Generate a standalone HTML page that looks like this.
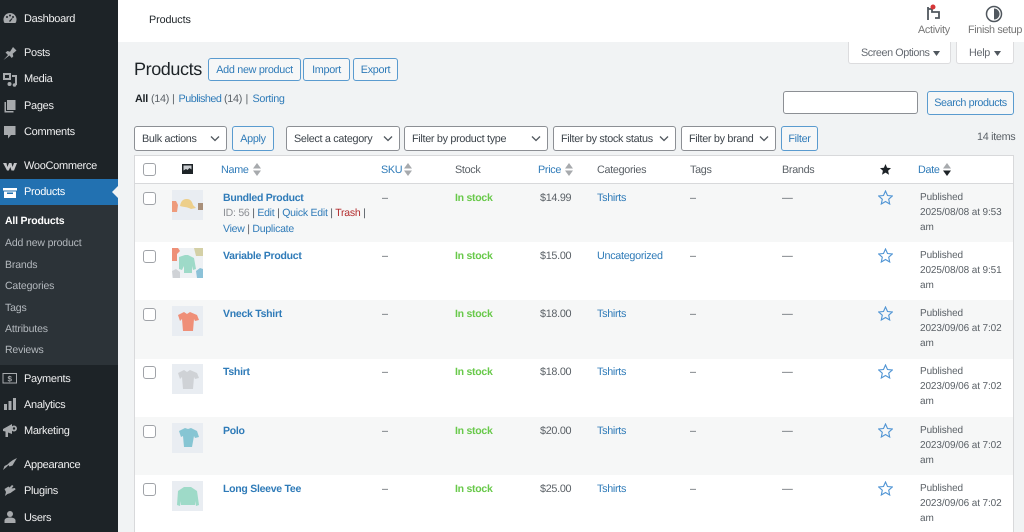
<!DOCTYPE html>
<html><head><meta charset="utf-8"><style>
html,body{margin:0;padding:0;width:1024px;height:532px;overflow:hidden;background:#f1f3f4;font-family:"Liberation Sans",sans-serif;font-size:10.8px;color:#5a6066;letter-spacing:-.3px;text-rendering:geometricPrecision}
#w{position:absolute;left:0;top:0;width:1024px;height:532px;overflow:hidden;filter:blur(.3px)}
.t{position:absolute;white-space:nowrap;line-height:14px}
.b{position:absolute;box-sizing:border-box;border-radius:3px}
.abs{position:absolute}
.m{color:#f0f0f1;font-size:11px}
.s{color:#b4b9be;font-size:10.5px;letter-spacing:-.15px}
.l{color:#2f7bb8}
.btn{border:1px solid #5a9bcf;background:#f6f7f7;color:#2f7bb8;text-align:center;line-height:22px}
.sel{border:1px solid #8c8f94;background:#fff;color:#3c434a;line-height:25px;padding-left:7px}
.sel svg{position:absolute;right:6px;top:8px}
.cb{position:absolute;left:143px;width:11px;height:11px;border:1px solid #a0a3a8;border-radius:3px;background:#fff;box-sizing:content-box}
.n{color:#2f7bb8;font-weight:bold;font-size:10.5px;letter-spacing:-.27px}
.g{color:#68c94a;font-weight:bold;font-size:10.5px;letter-spacing:-.27px}
.row{position:absolute;left:135px;width:878px}
.d{line-height:14.800px;font-size:10px;letter-spacing:-.1px}
</style></head><body><div id="w">
<div class="abs" style="left:0;top:0;width:118px;height:532px;background:#1d2327"></div>
<div class="abs" style="left:0;top:205px;width:118px;height:160px;background:#2c3338"></div>
<div class="abs" style="left:0;top:179px;width:118px;height:26px;background:#2271b1"></div>
<svg class="abs" style="left:112px;top:186px" width="6" height="12"><path d="M6 0L0 6L6 12Z" fill="#f1f3f4"/></svg>
<div class="abs" style="left:118px;top:0;width:906px;height:42px;background:#fff"></div>

<svg class="abs" style="left:0;top:0" width="22" height="532" fill="#a7aaad">
<path d="M10 13a6.500 6.500 0 0 1 5.500 10H4.500A6.500 6.500 0 0 1 10 13z"/><circle cx="7" cy="17" r="1" fill="#1d2327"/><circle cx="13" cy="17" r="1" fill="#1d2327"/><circle cx="10" cy="15.500" r="1" fill="#1d2327"/><path d="M9 21l3-3 .6.6-2.600 3.400z" fill="#1d2327"/>
<path d="M3.500 60l4.500-5-2.500-2.500 2-1.500 2.500.8L13 47l3.500 3.500-3.800 3.200.6 2.600-1.500 1.700L9.500 55.500z"/>
<path d="M3 73h8v7H3z M5 75v3h4v-3z" fill-rule="evenodd"/><path d="M12 75h5v10h-2v-8h-3z"/><circle cx="9.500" cy="84" r="2"/><circle cx="14.500" cy="85" r="1.800"/>
<path d="M7 100h8.500v10H7z"/><path d="M4.500 102H6v9h7.500v1.500h-9z"/>
<path d="M4 126h11.500v9h-4.500l-3 3.500v-3.500H4z"/>
<path d="M3 163h3.500l.8 4 1.700-4h2.500l1 4 1.500-4H17l-3 7.500h-2.500l-1.200-3.500-1.500 3.500H7z" fill="#c3c4c7"/>
<path d="M3 188h14v2.500H3zM4 191.500h12v6.500H4z" fill="#fff"/><path d="M7 192.500h6v1.500H7z" fill="#2271b1"/>
<path d="M2.500 373h14.500v10.500H2.500z M3.500 374v8.500h12.500v-8.500z" fill-rule="evenodd"/><text x="7.500" y="381.500" font-size="8" fill="#a7aaad" font-family="Liberation Sans" font-weight="bold">$</text>
<path d="M4 404h3v6H4zM8.500 401h3v9h-3zM13 398h3v12h-3z"/>
<path d="M3 429l9-5v10l-4-1.500v4.500H5.500v-5.500L3 431z"/><circle cx="14" cy="428.500" r="3"/><circle cx="14" cy="428.500" r="1.200" fill="#1d2327"/>
<path d="M3 470l1.500-4 3-1.500 2-2L13 460l4-2-2.500 4-2 3.500-3 1-1-1.500-2.500 2.500z"/>
<path d="M5 496l1-4-1.500-3 4-2.500 1 1L12 485l1.500 1-2 2.500L15 488l.5 1.500-3 2-2 1.500-3 1z"/>
<circle cx="10" cy="514" r="3"/><path d="M4.500 523v-2.500c0-2 2.500-3 5.500-3s5.500 1 5.500 3V523z"/>
</svg>

<span class="t m" style="left:24px;top:12px">Dashboard</span>
<span class="t m" style="left:24px;top:46px">Posts</span>
<span class="t m" style="left:24px;top:72px">Media</span>
<span class="t m" style="left:24px;top:99px">Pages</span>
<span class="t m" style="left:24px;top:125px">Comments</span>
<span class="t m" style="left:24px;top:159px">WooCommerce</span>
<span class="t m" style="left:24px;top:185px;color:#fff">Products</span>
<span class="t" style="left:5px;top:214px;color:#fff;font-weight:bold;font-size:10.5px;letter-spacing:-.2px">All Products</span>
<span class="t s" style="left:5px;top:236px">Add new product</span>
<span class="t s" style="left:5px;top:258px">Brands</span>
<span class="t s" style="left:5px;top:279px">Categories</span>
<span class="t s" style="left:5px;top:301px">Tags</span>
<span class="t s" style="left:5px;top:322px">Attributes</span>
<span class="t s" style="left:5px;top:343px">Reviews</span>
<span class="t m" style="left:24px;top:372px">Payments</span>
<span class="t m" style="left:24px;top:398px">Analytics</span>
<span class="t m" style="left:24px;top:424px">Marketing</span>
<span class="t m" style="left:24px;top:458px">Appearance</span>
<span class="t m" style="left:24px;top:484px">Plugins</span>
<span class="t m" style="left:24px;top:511px">Users</span>

<span class="t" style="left:149px;top:13px;color:#1d2327;font-size:10.8px;letter-spacing:-.1px">Products</span>
<svg class="abs" style="left:925px;top:3px" width="18" height="18"><path d="M3 4v13M3 6h4v3h7V15h-4" fill="none" stroke="#50575e" stroke-width="1.800"/><circle cx="8" cy="4" r="2.500" fill="#d63638"/></svg>
<span class="t" style="left:918px;top:23px;color:#757575">Activity</span>
<svg class="abs" style="left:985px;top:5px" width="18" height="18"><circle cx="9" cy="9" r="7.500" fill="#fff" stroke="#50575e" stroke-width="1.500"/><path d="M9 3.500a5.500 5.500 0 0 1 0 11z" fill="#50575e"/></svg>
<span class="t" style="left:968px;top:23px;color:#757575;letter-spacing:-.35px">Finish setup</span>

<div class="b" style="left:848px;top:42px;width:103px;height:22px;background:#fff;border:1px solid #dcdcde;border-top:0;border-radius:0 0 3px 3px"></div>
<span class="t" style="left:861px;top:46px;color:#646970;letter-spacing:-.42px">Screen Options</span>
<svg class="abs" style="left:933px;top:51px" width="8" height="6"><path d="M0 0h7L3.500 5z" fill="#50575e"/></svg>
<div class="b" style="left:956px;top:42px;width:58px;height:22px;background:#fff;border:1px solid #dcdcde;border-top:0;border-radius:0 0 3px 3px"></div>
<span class="t" style="left:969px;top:46px;color:#646970">Help</span>
<svg class="abs" style="left:994px;top:51px" width="8" height="6"><path d="M0 0h7L3.500 5z" fill="#50575e"/></svg>

<span class="t" style="left:134px;top:59px;font-size:18px;line-height:20px;color:#1d2327;letter-spacing:-.4px">Products</span>
<div class="b btn" style="left:208px;top:58px;width:93px;height:23px">Add new product</div>
<div class="b btn" style="left:303px;top:58px;width:47px;height:23px">Import</div>
<div class="b btn" style="left:353px;top:58px;width:45px;height:23px">Export</div>

<b class="t" style="left:135px;top:92px;color:#1d2327">All</b>
<span class="t" style="left:151px;top:92px">(14)</span>
<span class="t" style="left:172px;top:92px">|</span>
<span class="t l" style="left:178.500px;top:92px;letter-spacing:-.5px">Published</span>
<span class="t" style="left:224px;top:92px">(14)</span>
<span class="t" style="left:245.500px;top:92px">|</span>
<span class="t l" style="left:252.500px;top:92px">Sorting</span>

<div class="b" style="left:783px;top:91px;width:135px;height:23px;background:#fff;border:1px solid #8c8f94"></div>
<div class="b btn" style="left:927px;top:91px;width:87px;height:24px;line-height:23px;letter-spacing:-.4px">Search products</div>

<div class="b sel" style="left:134px;top:126px;width:93px;height:25px">Bulk actions<svg width="10" height="8"><path d="M1 1.500l4 4 4-4" fill="none" stroke="#50575e" stroke-width="1.300"/></svg></div>
<div class="b btn" style="left:232px;top:126px;width:42px;height:25px;line-height:25px">Apply</div>
<div class="b sel" style="left:286px;top:126px;width:114px;height:25px">Select a category<svg width="10" height="8"><path d="M1 1.500l4 4 4-4" fill="none" stroke="#50575e" stroke-width="1.300"/></svg></div>
<div class="b sel" style="left:404px;top:126px;width:144px;height:25px">Filter by product type<svg width="10" height="8"><path d="M1 1.500l4 4 4-4" fill="none" stroke="#50575e" stroke-width="1.300"/></svg></div>
<div class="b sel" style="left:553px;top:126px;width:123px;height:25px">Filter by stock status<svg width="10" height="8"><path d="M1 1.500l4 4 4-4" fill="none" stroke="#50575e" stroke-width="1.300"/></svg></div>
<div class="b sel" style="left:681px;top:126px;width:95px;height:25px">Filter by brand<svg width="10" height="8"><path d="M1 1.500l4 4 4-4" fill="none" stroke="#50575e" stroke-width="1.300"/></svg></div>
<div class="b btn" style="left:781px;top:126px;width:37px;height:25px;line-height:25px">Filter</div>
<span class="t" style="left:977px;top:130px">14 items</span>

<div class="abs" style="left:134px;top:155px;width:880px;height:377px;background:#fff;box-sizing:border-box;border:1px solid #d8d9db;border-bottom:0"></div>
<div class="abs" style="left:135px;top:183px;width:878px;height:1px;background:#d8d9db"></div>
<div class="row" style="top:184px;height:58px;background:#f6f7f7"></div>
<div class="row" style="top:300px;height:59px;background:#f6f7f7"></div>
<div class="row" style="top:417px;height:58px;background:#f6f7f7"></div>

<div class="cb" style="top:163px"></div>
<svg class="abs" style="left:182px;top:164px" width="11" height="10"><path d="M0 0h11v10H0z" fill="#1d2327"/><path d="M1.500 1.500h8v4l-2-1.500-2 2-1.500-1-2.500 1.500z" fill="#c9ccd0"/></svg>
<span class="t l" style="left:221px;top:163px">Name</span>
<svg class="abs" style="left:253px;top:163px" width="8" height="13"><path d="M0 5.500L4 0l4 5.500zM0 7.500L4 13l4-5.500z" fill="#a7aaad"/></svg>
<span class="t l" style="left:381px;top:163px">SKU</span>
<svg class="abs" style="left:404px;top:163px" width="8" height="13"><path d="M0 5.500L4 0l4 5.500zM0 7.500L4 13l4-5.500z" fill="#a7aaad"/></svg>
<span class="t" style="left:455px;top:163px">Stock</span>
<span class="t l" style="left:538px;top:163px">Price</span>
<svg class="abs" style="left:565px;top:163px" width="8" height="13"><path d="M0 5.500L4 0l4 5.500zM0 7.500L4 13l4-5.500z" fill="#a7aaad"/></svg>
<span class="t" style="left:597px;top:163px">Categories</span>
<span class="t" style="left:690px;top:163px">Tags</span>
<span class="t" style="left:782px;top:163px">Brands</span>
<svg class="abs" style="left:880px;top:164px" width="11" height="11"><path d="M5.500 0l1.600 3.700 4 .4-3 2.600.9 4L5.500 8.600 2 10.700l.9-4-3-2.600 4-.4z" fill="#1d2327"/></svg>
<span class="t l" style="left:918px;top:163px">Date</span>
<svg class="abs" style="left:943px;top:163px" width="8" height="13"><path d="M0 5.500L4 0l4 5.500z" fill="#a7aaad"/><path d="M0 7.500L4 13l4-5.500z" fill="#1d2327"/></svg>

<!-- rows -->
<div class="cb" style="top:192px"></div>
<div class="abs" style="left:172px;top:190px;width:31px;height:30px;background:#e9edf2"></div>
<svg class="abs" style="left:172px;top:190px" width="31" height="30"><path d="M0 11h4l2 4-1 7H0z" fill="#ee9b7c"/><path d="M8 16c1-6 4-7 7-7s5 2 6 6l3 3-5 1c-3-2-8-2-11-3z" fill="#edcf8b"/><path d="M26 13h5v7h-5z" fill="#a9907a"/></svg>
<span class="t n" style="left:223px;top:191px">Bundled Product</span>
<span class="t" style="left:223px;top:206px;color:#8c8f94;font-size:10.5px;letter-spacing:-.25px">ID: 56 <span style="color:#50575e">|</span> <span class="l">Edit</span> <span style="color:#50575e">|</span> <span class="l">Quick Edit</span> <span style="color:#50575e">|</span> <span style="color:#b32d2e">Trash</span> <span style="color:#50575e">|</span></span>
<span class="t" style="left:223px;top:222px;font-size:10.5px;letter-spacing:-.25px"><span class="l">View</span> | <span class="l">Duplicate</span></span>

<div class="cb" style="top:250px"></div>
<div class="abs" style="left:172px;top:248px;width:31px;height:30px;background:#eef1f4"></div>
<svg class="abs" style="left:172px;top:248px" width="31" height="30"><path d="M0 0h6l2 3-3 3v7H0z" fill="#ee9078"/><path d="M22 0h9v8h-7z" fill="#d4d0a6"/><path d="M7 9l6-2h3l6 3 2 11-3 1-1-4v7H12v-7l-2 4-3-1z" fill="#9edac8"/><path d="M0 23l4-2 4 3v6H1z" fill="#cfd2d6"/><path d="M24 23l4-3 3 1v9h-6z" fill="#8cc2d8"/></svg>
<span class="t n" style="left:223px;top:249px">Variable Product</span>

<div class="cb" style="top:308px"></div>
<div class="abs" style="left:172px;top:306px;width:31px;height:30px;background:#e9edf2"></div>
<svg class="abs" style="left:172px;top:306px" width="31" height="30"><path d="M6 9l6-3 3 2 3-2 7 3 2 5-4 1-1-2-1 12H11l-1-12-2 2z" fill="#ef8f78"/></svg>
<span class="t n" style="left:223px;top:307px">Vneck Tshirt</span>

<div class="cb" style="top:366px"></div>
<div class="abs" style="left:172px;top:364px;width:31px;height:30px;background:#e9edf2"></div>
<svg class="abs" style="left:172px;top:364px" width="31" height="30"><path d="M6 9l6-3 3 2 3-2 7 3 2 5-4 1-1-2-1 12H11l-1-12-2 2z" fill="#cfd2d6"/></svg>
<span class="t n" style="left:223px;top:365px">Tshirt</span>

<div class="cb" style="top:425px"></div>
<div class="abs" style="left:172px;top:423px;width:31px;height:30px;background:#e9edf2"></div>
<svg class="abs" style="left:172px;top:423px" width="31" height="30"><path d="M7 8l6-3 3 1 3-1 6 3 2 6-4 1-1-2-2 11H12l-1-11-2 1z" fill="#86c5d3"/></svg>
<span class="t n" style="left:223px;top:424px">Polo</span>

<div class="cb" style="top:483px"></div>
<div class="abs" style="left:172px;top:481px;width:31px;height:30px;background:#e9edf2"></div>
<svg class="abs" style="left:172px;top:481px" width="31" height="30"><path d="M6 10l6-4h7l6 4 2 14-3 1-1-5v4H9v-4l-1 5-3-1z" fill="#9edac8"/></svg>
<span class="t n" style="left:223px;top:482px">Long Sleeve Tee</span>

<span class="t" style="left:382px;top:191px">–</span><span class="t" style="left:382px;top:249px">–</span><span class="t" style="left:382px;top:307px">–</span><span class="t" style="left:382px;top:365px">–</span><span class="t" style="left:382px;top:424px">–</span><span class="t" style="left:382px;top:482px">–</span>
<span class="t g" style="left:455px;top:191px">In stock</span><span class="t g" style="left:455px;top:249px">In stock</span><span class="t g" style="left:455px;top:307px">In stock</span><span class="t g" style="left:455px;top:365px">In stock</span><span class="t g" style="left:455px;top:424px">In stock</span><span class="t g" style="left:455px;top:482px">In stock</span>
<span class="t" style="left:540px;top:191px">$14.99</span><span class="t" style="left:540px;top:249px">$15.00</span><span class="t" style="left:540px;top:307px">$18.00</span><span class="t" style="left:540px;top:365px">$18.00</span><span class="t" style="left:540px;top:424px">$20.00</span><span class="t" style="left:540px;top:482px">$25.00</span>
<span class="t l" style="left:597px;top:191px">Tshirts</span><span class="t l" style="left:597px;top:249px">Uncategorized</span><span class="t l" style="left:597px;top:307px">Tshirts</span><span class="t l" style="left:597px;top:365px">Tshirts</span><span class="t l" style="left:597px;top:424px">Tshirts</span><span class="t l" style="left:597px;top:482px">Tshirts</span>
<span class="t" style="left:690px;top:191px">–</span><span class="t" style="left:690px;top:249px">–</span><span class="t" style="left:690px;top:307px">–</span><span class="t" style="left:690px;top:365px">–</span><span class="t" style="left:690px;top:424px">–</span><span class="t" style="left:690px;top:482px">–</span>
<span class="t" style="left:782px;top:191px">—</span><span class="t" style="left:782px;top:249px">—</span><span class="t" style="left:782px;top:307px">—</span><span class="t" style="left:782px;top:365px">—</span><span class="t" style="left:782px;top:424px">—</span><span class="t" style="left:782px;top:482px">—</span>

<svg class="abs" style="left:878px;top:190px" width="15" height="15"><path d="M7.500 1l2 4.500 4.800.5-3.600 3.200 1 4.800-4.200-2.500-4.200 2.500 1-4.800L.7 6l4.800-.5z" fill="none" stroke="#4f94d4" stroke-width="1.100"/></svg>
<svg class="abs" style="left:878px;top:248px" width="15" height="15"><path d="M7.500 1l2 4.500 4.800.5-3.600 3.200 1 4.800-4.200-2.500-4.200 2.500 1-4.800L.7 6l4.800-.5z" fill="none" stroke="#4f94d4" stroke-width="1.100"/></svg>
<svg class="abs" style="left:878px;top:306px" width="15" height="15"><path d="M7.500 1l2 4.500 4.800.5-3.600 3.200 1 4.800-4.200-2.500-4.200 2.500 1-4.800L.7 6l4.800-.5z" fill="none" stroke="#4f94d4" stroke-width="1.100"/></svg>
<svg class="abs" style="left:878px;top:364px" width="15" height="15"><path d="M7.500 1l2 4.500 4.800.5-3.600 3.200 1 4.800-4.200-2.500-4.200 2.500 1-4.800L.7 6l4.800-.5z" fill="none" stroke="#4f94d4" stroke-width="1.100"/></svg>
<svg class="abs" style="left:878px;top:423px" width="15" height="15"><path d="M7.500 1l2 4.500 4.800.5-3.600 3.200 1 4.800-4.200-2.500-4.200 2.500 1-4.800L.7 6l4.800-.5z" fill="none" stroke="#4f94d4" stroke-width="1.100"/></svg>
<svg class="abs" style="left:878px;top:481px" width="15" height="15"><path d="M7.500 1l2 4.500 4.800.5-3.600 3.200 1 4.800-4.200-2.500-4.200 2.500 1-4.800L.7 6l4.800-.5z" fill="none" stroke="#4f94d4" stroke-width="1.100"/></svg>

<div class="t d" style="left:920px;top:191px">Published<br>2025/08/08 at 9:53<br>am</div>
<div class="t d" style="left:920px;top:249px">Published<br>2025/08/08 at 9:51<br>am</div>
<div class="t d" style="left:920px;top:307px">Published<br>2023/09/06 at 7:02<br>am</div>
<div class="t d" style="left:920px;top:365px">Published<br>2023/09/06 at 7:02<br>am</div>
<div class="t d" style="left:920px;top:424px">Published<br>2023/09/06 at 7:02<br>am</div>
<div class="t d" style="left:920px;top:482px">Published<br>2023/09/06 at 7:02<br>am</div>
</div></body></html>
